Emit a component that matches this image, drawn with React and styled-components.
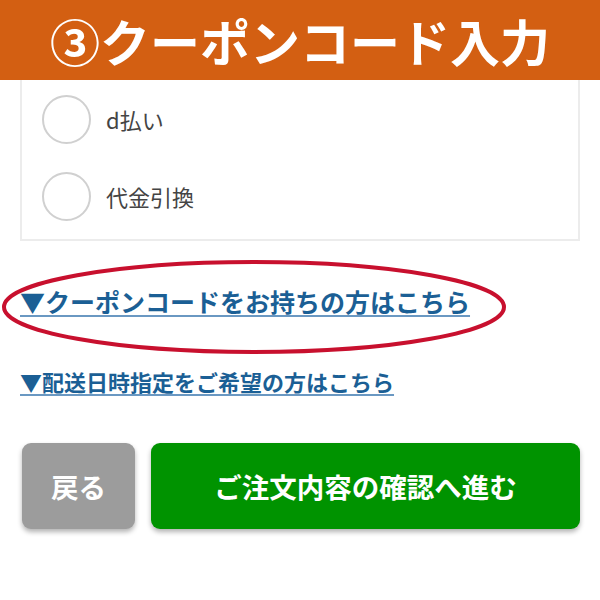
import React from "react";
import styled, { createGlobalStyle } from "styled-components";

const GlobalStyle = createGlobalStyle`
  html, body {
    margin: 0;
    padding: 0;
    background: #ffffff;
    font-family: "Noto Sans CJK JP", "Noto Sans", sans-serif;
  }
`;

const Page = styled.div`
  width: 600px;
  height: 600px;
  position: relative;
  overflow: hidden;
  background: #fff;
`;

const Header = styled.header`
  height: 80px;
  background: #d35f12;
  display: flex;
  align-items: center;
  justify-content: center;
  color: #fff;
  font-size: 50px;
  font-weight: 700;
  line-height: 1;
`;

const Card = styled.div`
  margin: 0 20px;
  border: 2px solid #ececec;
  border-top: none;
  padding: 15px 20px 19px 20px;
  display: flex;
  flex-direction: column;
  gap: 29px;
`;

const Option = styled.label`
  display: flex;
  align-items: center;
  gap: 15px;
  height: 48px;
  font-size: 22px;
  color: #444;
`;

const Radio = styled.span`
  width: 45px;
  height: 45px;
  border-radius: 50%;
  border: 2px solid #d0d0d0;
  flex-shrink: 0;
`;

const Links = styled.div`
  padding: 47px 0 0 20px;
  display: flex;
  flex-direction: column;
  gap: 53px;
`;

const ToggleLink = styled.a`
  display: inline-block;
  align-self: flex-start;
  color: #1b5f95;
  font-size: ${(p) => p.$size}px;
  font-weight: 700;
  line-height: 1.1;
  text-decoration: underline;
  text-decoration-color: #6a98c2;
  text-decoration-thickness: 2px;
  text-underline-offset: 3px;
  cursor: pointer;
`;

const Ellipse = styled.svg`
  position: absolute;
  left: 0;
  top: 258px;
`;

const Buttons = styled.div`
  display: flex;
  gap: 16px;
  margin: 50px 20px 0 22px;
`;

const Button = styled.button`
  height: 86px;
  border: none;
  border-radius: 9px;
  color: #fff;
  font-family: inherit;
  font-weight: 700;
  font-size: 27.5px;
  background: ${(p) => (p.$primary ? "#009300" : "#9c9c9c")};
  box-shadow: 0 3px 5px rgba(0, 0, 0, 0.3);
  ${(p) => (p.$primary ? "flex: 1;" : "width: 113px;")}
  cursor: pointer;
`;

export default function App() {
  return (
    <Page>
      <GlobalStyle />
      <Header>③クーポンコード入力</Header>
      <Card>
        <Option>
          <Radio />
          d払い
        </Option>
        <Option>
          <Radio />
          代金引換
        </Option>
      </Card>
      <Links>
        <ToggleLink $size={25}>▼クーポンコードをお持ちの方はこちら</ToggleLink>
        <ToggleLink $size={22}>▼配送日時指定をご希望の方はこちら</ToggleLink>
      </Links>
      <Ellipse width="520" height="100" viewBox="0 0 520 100">
        <ellipse cx="254" cy="49" rx="250" ry="45" fill="none" stroke="#c8102e" strokeWidth="4" />
      </Ellipse>
      <Buttons>
        <Button>戻る</Button>
        <Button $primary>ご注文内容の確認へ進む</Button>
      </Buttons>
    </Page>
  );
}
